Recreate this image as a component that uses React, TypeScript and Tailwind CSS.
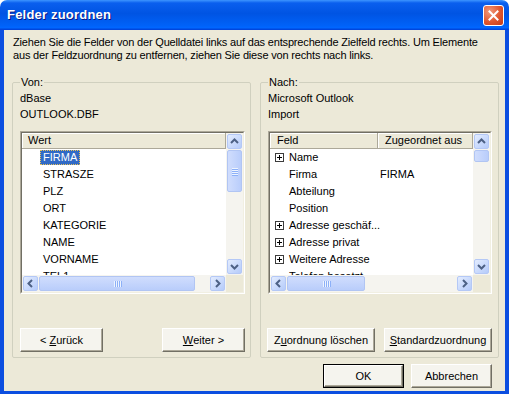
import React from "react";

type Dir = "up" | "down" | "left" | "right";

function Arrow({ dir }: { dir: Dir }) {
  const pts = {
    up: "1,6 4.5,2.5 8,6",
    down: "1,3 4.5,6.5 8,3",
    left: "6,1 2.5,4.5 6,8",
    right: "3,1 6.5,4.5 3,8",
  }[dir];
  return (
    <svg width="9" height="9" viewBox="0 0 9 9">
      <polyline points={pts} fill="none" stroke="#4d6185" strokeWidth="2" />
    </svg>
  );
}

function ScrollBtn({ dir }: { dir: Dir }) {
  return (
    <div className="w-[17px] h-[17px] shrink-0 p-[1px]">
      <div className="w-full h-full rounded-[2px] border border-[#b4c8f6] bg-linear-to-br from-[#e3ecfe] to-[#b5cbfa] flex items-center justify-center">
        <Arrow dir={dir} />
      </div>
    </div>
  );
}

function VScroll({ thumb, grip }: { thumb: string; grip?: boolean }) {
  return (
    <div className="flex flex-col h-full bg-[#f5f4ef]">
      <ScrollBtn dir="up" />
      <div className="flex-1">
        <div
          className={`${thumb} mx-[1px] rounded-[2px] border border-[#b1c5f3] bg-linear-to-r from-[#d0ddfd] to-[#b9cdfb] flex flex-col items-center justify-center gap-[1px]`}
        >
          {grip &&
            [0, 1, 2, 3].map((i) => (
              <div key={i} className="w-[6px] h-[1px] bg-[#eef4fe] shadow-[0_1px_0_#8cb0f8]" />
            ))}
        </div>
      </div>
      <ScrollBtn dir="down" />
    </div>
  );
}

function HScroll({ thumb }: { thumb: string }) {
  return (
    <div className="flex h-full bg-[#f5f4ef]">
      <ScrollBtn dir="left" />
      <div className="flex-1 flex">
        <div
          className={`${thumb} my-[1px] rounded-[2px] border border-[#b1c5f3] bg-linear-to-b from-[#d0ddfd] to-[#b9cdfb] flex items-center justify-center gap-[1px]`}
        >
          {[0, 1, 2, 3].map((i) => (
            <div key={i} className="h-[6px] w-[1px] bg-[#eef4fe] shadow-[1px_0_0_#8cb0f8]" />
          ))}
        </div>
      </div>
      <ScrollBtn dir="right" />
    </div>
  );
}

function Sunken({ className, children }: { className: string; children: React.ReactNode }) {
  return (
    <div className={`${className} border border-t-[#aca899] border-l-[#aca899] border-r-white border-b-white`}>
      <div className="w-full h-full border border-t-[#716f64] border-l-[#716f64] border-r-[#f1efe2] border-b-[#f1efe2] bg-white grid grid-cols-[1fr_17px] grid-rows-[1fr_17px]">
        {children}
      </div>
    </div>
  );
}

function HeaderCell({ className, children }: { className: string; children: React.ReactNode }) {
  return (
    <div
      className={`${className} h-[16px] shrink-0 leading-[15px] bg-[#ece9d8] border-r border-b border-[#aca899] shadow-[inset_1px_1px_0_#fff] whitespace-nowrap overflow-hidden`}
    >
      {children}
    </div>
  );
}

function Plus() {
  return (
    <svg width="9" height="9" viewBox="0 0 9 9" className="shrink-0">
      <rect x="0.5" y="0.5" width="8" height="8" fill="#fff" stroke="#3c3c3c" />
      <path d="M2 4.5h5M4.5 2v5" stroke="#000" />
    </svg>
  );
}

function Btn({ w, def, children }: { w: string; def?: boolean; children: React.ReactNode }) {
  return (
    <div className={`${w} h-[24px] ${def ? "border border-black" : ""}`}>
      <div className="w-full h-full bg-[#f5f4ee] border border-t-white border-l-white border-r-[#716f64] border-b-[#716f64] shadow-[inset_-1px_-1px_0_#aca899] flex items-center justify-center whitespace-pre">
        {children}
      </div>
    </div>
  );
}

const sourceFields = ["STRASZE", "PLZ", "ORT", "KATEGORIE", "NAME", "VORNAME", "TEL1"];

const targetFields: { name: string; plus?: boolean; from?: string }[] = [
  { name: "Name", plus: true },
  { name: "Firma", from: "FIRMA" },
  { name: "Abteilung" },
  { name: "Position" },
  { name: "Adresse geschäf...", plus: true },
  { name: "Adresse privat", plus: true },
  { name: "Weitere Adresse", plus: true },
  { name: "Telefon besetzt" },
];

export default function App() {
  return (
    <div className="w-[509px] h-[394px] flex flex-col font-['Liberation_Sans',Arial,sans-serif] text-[11px] text-black select-none">
      {/* Title bar */}
      <div className="h-[30px] shrink-0 rounded-t-[7px] bg-[linear-gradient(to_bottom,#3d95ff_0%,#0a5fee_10%,#0054e3_45%,#0062f8_85%,#0066ff_92%,#0052e8_96%,#003dd7_100%)] flex items-center justify-between pl-[7px] pr-[5px]">
        <span className="text-white font-bold text-[13px] [text-shadow:1px_1px_0_#0a1883] tracking-[0.2px]">
          Felder zuordnen
        </span>
        <div className="w-[21px] h-[21px] rounded-[3px] border border-white bg-[radial-gradient(circle_at_30%_30%,#f09a7c_0%,#e0572f_55%,#c63b18_100%)] flex items-center justify-center">
          <svg width="11" height="11" viewBox="0 0 11 11">
            <path d="M1.5 1.5l8 8M9.5 1.5l-8 8" stroke="#fff" strokeWidth="2" strokeLinecap="square" />
          </svg>
        </div>
      </div>

      {/* Body */}
      <div className="flex-1 flex flex-col bg-[#ece9d8] border-x-4 border-b-[3px] border-[#0b4ee0]">
        <p className="pt-[6px] pl-[9px] leading-[13px] tracking-[-0.17px]">
          Ziehen Sie die Felder von der Quelldatei links auf das entsprechende Zielfeld rechts. Um Elemente
          <br />
          aus der Feldzuordnung zu entfernen, ziehen Sie diese von rechts nach links.
        </p>

        <div className="flex gap-[9px] ml-[8px] mt-[14px]">
          {/* Von */}
          <fieldset className="w-[239px] border border-[#d0d0bf] rounded-[2px] pl-[7px] pr-[5px] pb-[5px]">
            <legend className="px-[1px] leading-[13px]">Von:</legend>
            <div className="mt-[1px] leading-[16px]">dBase</div>
            <div className="leading-[16px]">OUTLOOK.DBF</div>
            <Sunken className="mt-[9px] w-[225px] h-[163px]">
              <div className="overflow-hidden flex flex-col">
                <HeaderCell className="pl-[6px]">Wert</HeaderCell>
                <div className="h-[17px] shrink-0 flex items-center pl-[18px]">
                  <span className="h-[15px] leading-[13px] px-[2px] bg-[#316ac5] text-white border border-dotted border-[#e8c15a]">
                    FIRMA
                  </span>
                </div>
                {sourceFields.map((f) => (
                  <div key={f} className="h-[17px] leading-[17px] pl-[21px] shrink-0">
                    {f}
                  </div>
                ))}
              </div>
              <VScroll thumb="h-[42px]" grip />
              <HScroll thumb="w-[156px]" />
              <div className="bg-[#ece9d8]" />
            </Sunken>
            <div className="flex justify-between mt-[34px]">
              <Btn w="w-[83px]">
                {"< "}
                <u className="underline-offset-1">Z</u>urück
              </Btn>
              <Btn w="w-[83px]">
                <u className="underline-offset-1">W</u>
                {"eiter >"}
              </Btn>
            </div>
          </fieldset>

          {/* Nach */}
          <fieldset className="w-[239px] border border-[#d0d0bf] rounded-[2px] pl-[7px] pr-[6px] pb-[5px]">
            <legend className="px-[1px] leading-[13px]">Nach:</legend>
            <div className="mt-[1px] leading-[16px]">Microsoft Outlook</div>
            <div className="leading-[16px]">Import</div>
            <Sunken className="mt-[9px] w-[224px] h-[163px]">
              <div className="overflow-hidden flex flex-col">
                <div className="flex shrink-0">
                  <HeaderCell className="w-[108px] pl-[7px]">Feld</HeaderCell>
                  <HeaderCell className="flex-1 pl-[7px]">Zugeordnet aus</HeaderCell>
                </div>
                {targetFields.map((f) => (
                  <div key={f.name} className="h-[17px] shrink-0 flex items-center whitespace-nowrap">
                    <div className="w-[108px] flex items-center pl-[5px] gap-[5px]">
                      {f.plus ? <Plus /> : <span className="w-[9px]" />}
                      <span>{f.name}</span>
                    </div>
                    <div className="pl-[2px]">{f.from ?? ""}</div>
                  </div>
                ))}
              </div>
              <VScroll thumb="h-[12px]" />
              <HScroll thumb="w-[78px]" />
              <div className="bg-[#ece9d8]" />
            </Sunken>
            <div className="flex justify-between mt-[34px] -ml-[1px] w-[225px]">
              <Btn w="w-[108px]">
                Z<u className="underline-offset-1">u</u>ordnung löschen
              </Btn>
              <Btn w="w-[108px]">
                <u className="underline-offset-1">S</u>tandardzuordnung
              </Btn>
            </div>
          </fieldset>
        </div>

        <div className="flex justify-end gap-[7px] pr-[13px] mt-[6px]">
          <Btn w="w-[81px]" def>
            OK
          </Btn>
          <Btn w="w-[81px]">Abbrechen</Btn>
        </div>
      </div>
    </div>
  );
}
